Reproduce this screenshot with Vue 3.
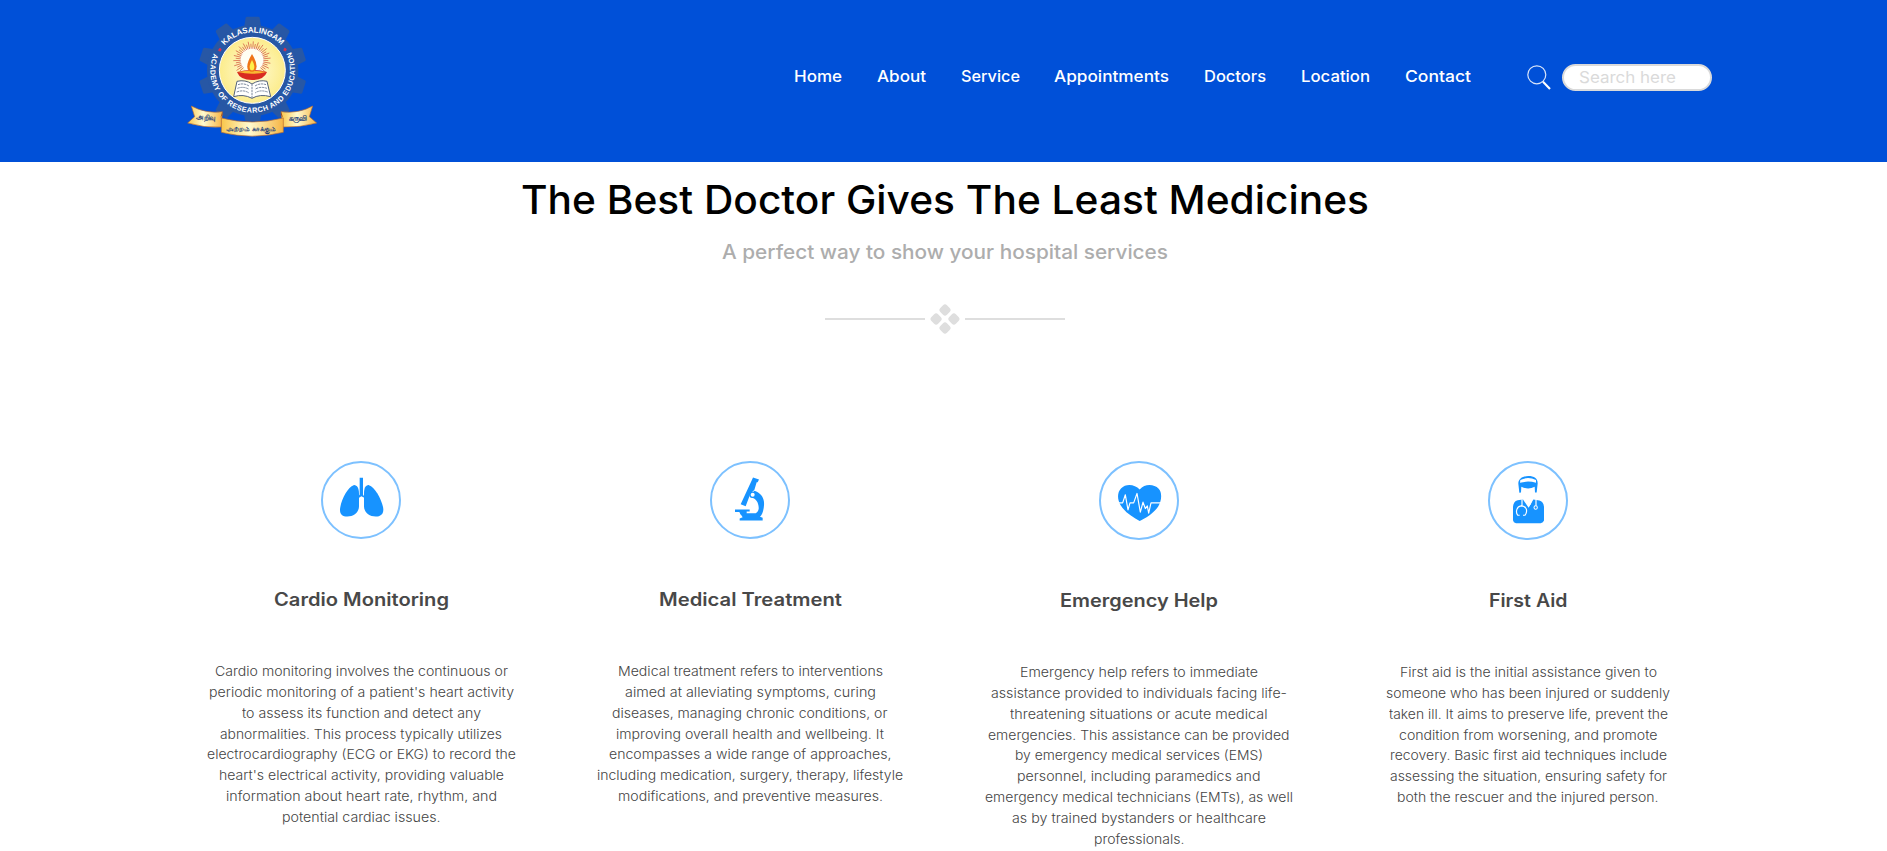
<script setup>
const navItems = [
  { label: 'Home', width: 48 },
  { label: 'About', width: 49 },
  { label: 'Service', width: 59 },
  { label: 'Appointments', width: 115 },
  { label: 'Doctors', width: 62 },
  { label: 'Location', width: 69 },
  { label: 'Contact', width: 66 },
]

const services = [
  {
    icon: 'lungs', title: 'Cardio Monitoring', width: 175,
    lines: [
      ['Cardio monitoring involves the continuous or', 293],
      ["periodic monitoring of a patient's heart activity", 305],
      ['to assess its function and detect any', 239],
      ['abnormalities. This process typically utilizes', 282],
      ['electrocardiography (ECG or EKG) to record the', 309],
      ["heart's electrical activity, providing valuable", 285],
      ['information about heart rate, rhythm, and', 271],
      ['potential cardiac issues.', 158.5],
    ],
  },
  {
    icon: 'microscope', title: 'Medical Treatment', width: 183,
    lines: [
      ['Medical treatment refers to interventions', 265],
      ['aimed at alleviating symptoms, curing', 251],
      ['diseases, managing chronic conditions, or', 275.5],
      ['improving overall health and wellbeing. It', 268],
      ['encompasses a wide range of approaches,', 282.5],
      ['including medication, surgery, therapy, lifestyle', 306],
      ['modifications, and preventive measures.', 265],
    ],
  },
  {
    icon: 'heart', title: 'Emergency Help', width: 158, tall: true,
    lines: [
      ['Emergency help refers to immediate', 238],
      ['assistance provided to individuals facing life-', 296],
      ['threatening situations or acute medical', 257.5],
      ['emergencies. This assistance can be provided', 301.5],
      ['by emergency medical services (EMS)', 248],
      ['personnel, including paramedics and', 243.5],
      ['emergency medical technicians (EMTs), as well', 308],
      ['as by trained bystanders or healthcare', 254],
      ['professionals.', 90.5],
    ],
  },
  {
    icon: 'doctor', title: 'First Aid', width: 78.5, tall: true,
    lines: [
      ['First aid is the initial assistance given to', 257],
      ['someone who has been injured or suddenly', 284],
      ['taken ill. It aims to preserve life, prevent the', 279],
      ['condition from worsening, and promote', 258.5],
      ['recovery. Basic first aid techniques include', 277],
      ['assessing the situation, ensuring safety for', 277],
      ['both the rescuer and the injured person.', 261.5],
    ],
  },
]

const teeth = Array.from({ length: 10 }, (_, i) => i * 36)
const rays = Array.from({ length: 34 }, (_, i) => -132 + i * 8)

// Widens a text run so that it spans the given width.
const vFit = {
  mounted(el, { value }) {
    const ratio = value / el.getBoundingClientRect().width
    el.style.width = `${value}px`
    el.style.transform = `scaleX(${ratio})`
  },
}
</script>

<template>
  <div class="page">
    <header class="header">
      <svg class="logo" viewBox="0 0 510 486">
        <defs>
          <radialGradient id="disc">
            <stop offset="0" stop-color="#fffbd8" />
            <stop offset="1" stop-color="#fcec8c" />
          </radialGradient>
          <linearGradient id="ribbon" x1="0" x2="1">
            <stop offset="0" stop-color="#f9c64b" />
            <stop offset=".45" stop-color="#fffbd0" />
            <stop offset="1" stop-color="#f6b545" />
          </linearGradient>
          <path id="arcTop" d="M164 137A111 111 0 0 1 337 141" />
          <path id="arcBottom" d="M133 157A127 127 0 1 0 363 157" />
        </defs>
        <g fill="#2757a5">
          <path v-for="a in teeth" :key="a" d="M221 90L227 53Q228 50 232 50H264Q268 50 269 53L275 90Z" :transform="`rotate(${a} 248 212)`" />
          <circle cx="248" cy="212" r="137" />
        </g>
        <circle cx="247" cy="211" r="99" fill="url(#disc)" stroke="#fff" stroke-width="3" />
        <circle cx="246" cy="178" r="37" fill="#fff" opacity=".85" />
        <g stroke="#d97050" stroke-width="2.500">
          <path v-for="(r, i) in rays" :key="r" :d="i % 2 ? 'M246 146V124' : 'M246 146V131'" :transform="`rotate(${r} 246 180)`" />
        </g>
        <path d="M201 244Q226 238 246 252Q268 238 291 244L302 290Q270 281 246 295Q220 281 191 290Z" fill="#fff" stroke="#54627a" stroke-width="3" />
        <path d="M246 252V294M204 254Q222 248 237 258M202 265Q222 258 237 268M200 276Q222 268 237 279M288 254Q270 248 255 258M291 265Q270 258 255 268M293 276Q270 268 255 279" fill="none" stroke="#7c899d" stroke-width="3" stroke-dasharray="7 2" />
        <path d="M201 216Q245 204 291 216Q282 240 246 240Q210 240 201 216Z" fill="#d92b20" />
        <path d="M203 216Q245 208 289 216Q246 227 203 216Z" fill="#f9b832" />
        <path d="M246 162Q225 196 235 211Q246 220 256 211Q267 196 246 162Z" fill="#ef7416" />
        <path d="M246 180Q235 200 241 209Q246 213 251 209Q257 200 246 180Z" fill="#fff04a" />
        <g class="seal-text">
          <text class="seal-name" textLength="192"><textPath href="#arcTop" textLength="192">KALASALINGAM</textPath></text>
          <text textLength="508"><textPath href="#arcBottom" startOffset="3" textLength="508">ACADEMY OF RESEARCH AND EDUCATION</textPath></text>
        </g>
        <path d="M150 144l4 5-3 5-6-3zM344 144l5 3-2 6-6-2z" fill="#e0304b" stroke="#e0304b" stroke-width="2" />
        <g stroke="#b96c32" stroke-width="2" fill="url(#ribbon)">
          <path d="M64 318Q108 342 157 335L154 381Q102 384 53 369L74 350Z" />
          <path d="M428 318Q386 342 333 335L338 381Q389 383 440 369L418 350Z" />
          <path d="M154 354Q246 378 340 354V397Q246 420 154 397Z" />
        </g>
        <path d="M157 335V344L151 354ZM333 335V344L340 354Z" fill="#9c4726" />
        <g class="ribbon-text">
          <text x="108" y="360" textLength="60" lengthAdjust="spacingAndGlyphs" transform="rotate(3 108 360)">அறிவு</text>
          <text x="243" y="393" textLength="151" lengthAdjust="spacingAndGlyphs">அற்றம் காக்கும்</text>
          <text x="384" y="362" textLength="56" lengthAdjust="spacingAndGlyphs" transform="rotate(-4 384 362)">கருவி</text>
        </g>
      </svg>
      <nav class="nav">
        <a v-for="item in navItems" :key="item.label" class="nav-link"><span v-fit="item.width" class="run">{{ item.label }}</span></a>
      </nav>
      <div class="search">
        <svg class="search-icon" viewBox="0 0 24 25" fill="none" stroke="#fff">
          <circle cx="9.800" cy="9.800" r="9" stroke-width="1.200" opacity=".85" />
          <path d="M16 16.800L23 24" stroke-width="2.100" />
        </svg>
        <div class="search-box"><span v-fit="97" class="run">Search here</span></div>
      </div>
    </header>

    <section class="intro">
      <h1><span v-fit="848" class="run">The Best Doctor Gives The Least Medicines</span></h1>
      <p><span v-fit="446" class="run">A perfect way to show your hospital services</span></p>
      <div class="divider">
        <i class="rule"></i>
        <svg class="diamonds" viewBox="0 0 30 30" fill="#dedede">
          <rect x="10.300" y="1.300" width="9.400" height="9.400" rx="2.800" transform="rotate(45 15 6)" />
          <rect x="1.400" y="10.300" width="9.400" height="9.400" rx="2.800" transform="rotate(45 6.100 15)" />
          <rect x="19.200" y="10.300" width="9.400" height="9.400" rx="2.800" transform="rotate(45 23.900 15)" />
          <rect x="10.300" y="19.300" width="9.400" height="9.400" rx="2.800" transform="rotate(45 15 24)" />
        </svg>
        <i class="rule"></i>
      </div>
    </section>

    <main class="services">
      <article v-for="s in services" :key="s.title" class="card">
        <svg class="badge" :class="{ tall: s.tall }" viewBox="0 0 240 236" preserveAspectRatio="none">
          <ellipse cx="120" cy="118" rx="117" ry="115" fill="none" stroke="#7dc1ff" stroke-width="6" />
          <g v-if="s.icon === 'lungs'" fill="#1793ff">
            <path d="M116 51H126V101Q130 107 130 111L121 107L113 112V106L116 101Z" />
            <path d="M98 73C108 72 114 83 114 98V137C114 155 98 168 79 168C62 168 54 158 58 139C63 112 82 77 98 73Z" />
            <path d="M144 73C134 72 129 83 129 98V137C129 155 145 168 164 168C181 168 190 158 186 139C180 112 160 77 144 73Z" />
          </g>
          <g v-else-if="s.icon === 'microscope'" fill="#1793ff">
            <path d="M129 50L147 56L143 64L140 64L133 88L122 97L107 137L92 131L124 61Z" />
            <path d="M133 90C153 96 164 113 162 134C161 149 157 162 150 169L158 172V180H89V174L98 170L90 158H137C147 152 148 143 144 129C141 119 132 111 121 110Z" />
            <path d="M75 147H119V153H110V162H92L88 154H75Z" />
            <circle cx="128" cy="102" r="10" /><circle cx="128" cy="102" r="6" fill="#fff" />
          </g>
          <g v-else-if="s.icon === 'heart'">
            <path d="M122 85C138 67 165 69 179 83C191 96 187 120 178 135C164 157 139 171 122 179C103 169 78 154 64 131C55 115 54 94 66 82C81 66 107 69 122 85Z" fill="#1793ff" />
            <path d="M58 125H71L79 101L87 146L93 125H104L114 97L124 153L132 123L139 142L145 134L149 156L156 125H188" fill="none" stroke="#fff" stroke-width="3.500" stroke-linejoin="round" />
          </g>
          <g v-else fill="#1793ff">
            <path d="M94 95L91 68C91 51 106 45 121 45C138 45 149 52 149 67L146 94H141L140 77Q121 87 100 77L99 94Z" />
            <path d="M97 57Q120 45 144 57V65Q120 58 96 65Z" fill="#fff" />
            <path d="M105 115L122 140L136 115L154 118Q166 120 168 137V178Q166 185 158 186H84Q76 184 75 177V137Q76 120 89 117Z" />
            <path d="M108 114L118 131L122 136L128 129L134 114Z" fill="#fff" />
            <path d="M102 114V133M95 162H89C82 153 86 136 99 134C113 134 119 145 114 157L111 162H105M144 114V134" fill="none" stroke="#fff" stroke-width="3.500" />
            <circle cx="143" cy="139" r="5" fill="#1793ff" stroke="#fff" stroke-width="3" />
          </g>
        </svg>
        <h2><span v-fit="s.width" class="run">{{ s.title }}</span></h2>
        <div class="copy">
          <div v-for="[text, width] in s.lines" :key="text" class="line"><span v-fit="width" class="run">{{ text }}</span></div>
        </div>
      </article>
    </main>
  </div>
</template>

<style>
body { margin: 0; background: #fff; overflow: hidden; }
</style>

<style scoped>
.page {
  width: 1887px;
  height: 851px;
  overflow: hidden;
  font-family: Inter, "Noto Sans", sans-serif;
  background: #fff;
}
.run { display: inline-block; white-space: nowrap; transform-origin: 0 50%; text-align: left; }
.header {
  display: flex;
  align-items: flex-start;
  height: 162px;
  padding-left: 170px;
  background: #0050d8;
}
.logo { width: 170px; height: 162px; flex: none; }
.seal-text { font: bold 22px "Liberation Sans", sans-serif; fill: #fff; }
.seal-name { font-size: 24px; }
.ribbon-text { font: bold 21px "Noto Sans", sans-serif; fill: #243f7a; text-anchor: middle; }
.nav { display: flex; gap: 34.800px; margin: 64px 0 0 454px; }
.nav-link {
  color: #fff;
  font-size: 16px;
  font-weight: 500;
  line-height: 25px;
}
.search { display: flex; gap: 11.500px; margin: 64px 0 0 56px; }
.search-icon { width: 24px; height: 25px; margin-top: .5px; }
.search-box {
  box-sizing: border-box;
  width: 150px;
  height: 27px;
  padding-left: 15px;
  border: 2px solid #dadada;
  border-radius: 14px;
  background: #fff;
  color: #dadada;
  font-size: 16px;
  font-weight: 400;
  line-height: 23px;
}
.intro { display: flex; flex-direction: column; align-items: center; padding-left: 3px; }
h1, h2, p { margin: 0; }
h1 { height: 60px; margin: 8px 1px 0 0; font-size: 39.500px; font-weight: 450; line-height: 60px; color: #000; }
p { height: 30px; margin: 7px 1px 0 0; font-size: 20px; font-weight: 500; line-height: 30px; color: #adadad; }
.divider { display: flex; align-items: center; gap: 5px; height: 30px; margin-top: 37px; }
.rule { width: 100px; height: 2px; background: #dedede; }
.diamonds { width: 30px; height: 30px; }
.services { display: grid; grid-template-columns: repeat(4, 389px); margin: 127px 0 0 166.500px; }
.card { display: flex; flex-direction: column; align-items: center; }
.badge { width: 80px; height: 78px; }
.badge.tall { height: 79px; }
h2 { margin-top: 46px; font-size: 18px; font-weight: 600; line-height: 30px; color: #484848; }
.copy { margin-top: 46px; }
.line { height: 20.850px; font-size: 13px; font-weight: 350; line-height: 20.850px; text-align: center; color: #444; }
</style>
